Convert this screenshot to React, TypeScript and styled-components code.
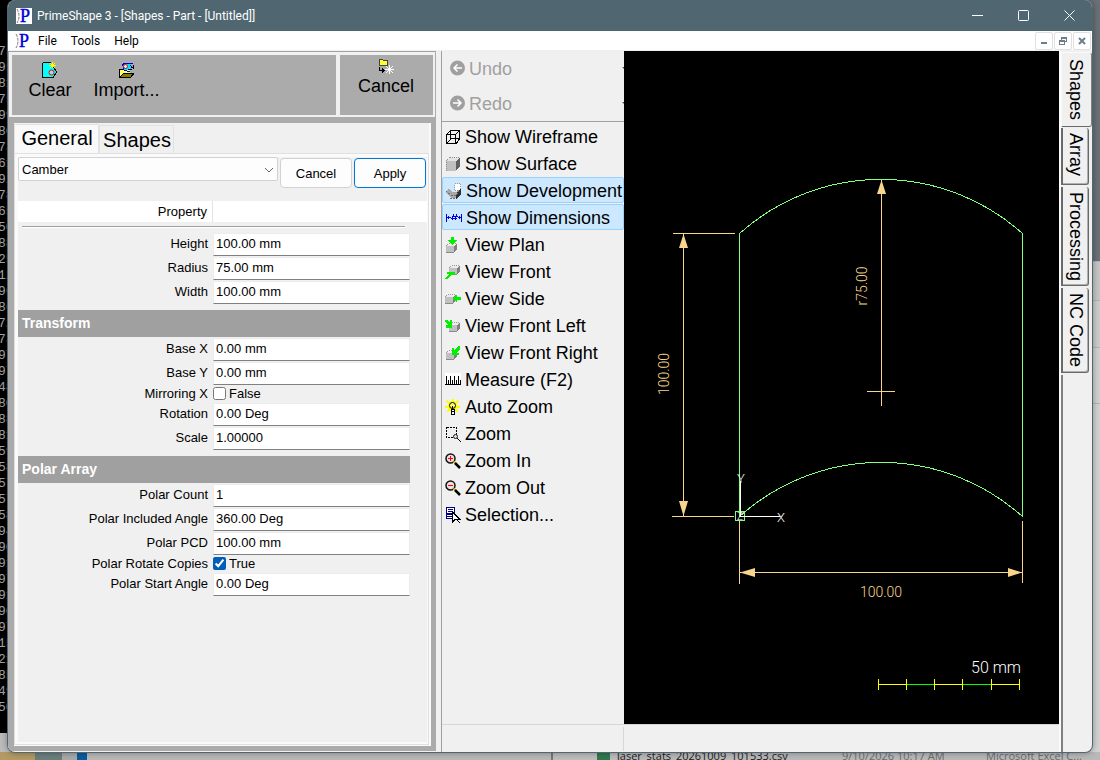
import React from "react";
import styled, { createGlobalStyle, css } from "styled-components";

const GlobalStyle = createGlobalStyle`
  *, *::before, *::after { box-sizing: border-box; }
  body { margin: 0; background: #bcbcbc; }
  button, input, select { font: inherit; color: inherit; }
  h2, p { margin: 0; }
`;

const ui = `"Liberation Sans", Arial, sans-serif`;
const chrome = `Roboto, "Open Sans", sans-serif`;
const segoe = `"Open Sans", "Noto Sans", sans-serif`;

/* ---------- desktop behind the window ---------- */

const Desktop = styled.div`
  display: grid;
  height: 100vh;
  overflow: hidden;
  font-family: ${ui};
`;

const Backdrop = styled.div`
  grid-area: 1 / 1;
  min-height: 0;
  min-width: 0;
  display: flex;
  flex-direction: column;
  overflow: hidden;
`;

const BackdropMain = styled.div`
  flex: 1;
  min-height: 0;
  display: flex;
  justify-content: space-between;
`;

const Console = styled.div`
  width: 20px;
  margin-bottom: 19px;
  padding-top: 44px;
  overflow: hidden;
  background: #000;
  color: #a4a4a4;
  font: 13px/16px "Liberation Mono", monospace;
  text-indent: -2px;
`;

const BehindRight = styled.div`
  width: 20px;
  display: flex;
  flex-direction: column;
  background: #d2d2d2;
`;

const Slab = styled.div<{ $h: number; $bg: string }>`
  height: ${(p) => p.$h}px;
  background: ${(p) => p.$bg};
  border-bottom: 1px solid #b4b4b4;
`;

const Explorer = styled.div`
  height: 8px;
  display: flex;
  overflow: hidden;
  background: #b9b9b9;
  font: 11px/16px ${segoe};
  white-space: nowrap;
`;

const Swatch = styled.div<{ $w: number; $bg: string }>`
  flex: none;
  width: ${(p) => p.$w}px;
  background: ${(p) => p.$bg};
`;

const FileCell = styled.span<{ $w: number; $dim?: boolean }>`
  flex: none;
  width: ${(p) => p.$w}px;
  height: 16px;
  margin-top: -4px;
  color: ${(p) => (p.$dim ? "#6c6c6c" : "#1c1c1c")};
`;

/* ---------- window chrome ---------- */

const Window = styled.div`
  grid-area: 1 / 1;
  z-index: 1;
  min-height: 0;
  min-width: 0;
  margin: 0 7px 7px;
  display: flex;
  flex-direction: column;
  overflow: hidden;
  border: 1px solid #506772;
  border-top: 0;
  border-radius: 8px;
  background: #f0f0f0;
  box-shadow: 0 0 6px rgba(0, 0, 0, 0.35);
`;

const TitleBar = styled.header`
  flex: none;
  height: 31px;
  padding-left: 8px;
  display: flex;
  align-items: center;
  gap: 5px;
  background: #506772;
  color: #fff;
  font: 12px/16px ${chrome};
`;

const TitleText = styled.span`
  flex: 1;
`;

const CaptionRow = styled.div`
  display: flex;
`;

const CaptionButton = styled.button`
  width: 46px;
  height: 31px;
  padding: 0;
  border: 0;
  background: none;
  color: #fff;
  display: grid;
  place-items: center;
`;

const MenuBar = styled.nav`
  flex: none;
  height: 20px;
  padding: 0 1px 0 7px;
  display: flex;
  align-items: center;
  background: #fff;
  border-bottom: 1px solid #f0f0f0;
  font: 12px/16px ${chrome};
`;

const MenuButton = styled.button`
  padding: 0 7px;
  border: 0;
  background: none;
  color: #000;
`;

const Spacer = styled.div`
  flex: 1;
`;

const MdiButton = styled.button`
  width: 18px;
  height: 18px;
  margin-left: 1px;
  padding: 0;
  border: 1px solid #e0e0e0;
  border-radius: 2px;
  background: #fff;
  color: #6a7f8c;
  display: grid;
  place-items: center;
`;

const Workspace = styled.div`
  flex: 1;
  min-height: 0;
  display: flex;
`;

/* ---------- left panel ---------- */

const LeftPanel = styled.section`
  flex: none;
  width: 428px;
  margin-bottom: 1px;
  display: flex;
  flex-direction: column;
  border-top: 1px solid #a0a0a0;
  background: #ababab;
`;

const ActionBar = styled.div`
  flex: none;
  height: 65px;
  margin: 0 1px;
  border: solid #f0f0f0;
  border-width: 3px 2px 2px 3px;
  display: flex;
  gap: 4px;
  background: #f0f0f0;
`;

const ActionGroup = styled.div<{ $grow?: boolean }>`
  ${(p) => (p.$grow ? "flex: 1;" : "width: 93px;")}
  display: flex;
  background: #ababab;
`;

const ActionButton = styled.button<{ $top: number; $w: number }>`
  width: ${(p) => p.$w}px;
  padding: ${(p) => p.$top}px 0 0;
  border: 0;
  background: none;
  color: #000;
  display: flex;
  flex-direction: column;
  align-items: center;
  gap: 2px;
  font-size: 18px;
  line-height: 20px;
`;

const Tabs = styled.div`
  flex: 1;
  min-height: 0;
  margin: 6px 5px 5px 6px;
  padding: 0 2px 1px 0;
  display: flex;
  flex-direction: column;
  background: #f0f0f0;
  box-shadow: inset -2px -1px 0 #fafafa;
`;

const TabStrip = styled.div`
  flex: none;
  height: 30px;
  padding-top: 1px;
  display: flex;
  align-items: flex-end;
`;

const Tab = styled.button<{ $on?: boolean }>`
  height: ${(p) => (p.$on ? 29 : 28)}px;
  width: ${(p) => (p.$on ? 85 : 75)}px;
  padding: 0 0 ${(p) => (p.$on ? 2 : 0)}px 1px;
  border: 1px solid #e2e2e2;
  border-bottom: 0;
  background: ${(p) => (p.$on ? "#f9f9f9" : "#f0f0f0")};
  color: #000;
  font-size: 20px;
  line-height: 26px;
`;

const TabPage = styled.div`
  flex: 1;
  min-height: 0;
  border: 1px solid #e0e0e0;
  padding: 3px 1px 2px 3px;
  background: #fafafa;
  display: flex;
`;

const Form = styled.form`
  flex: 1;
  background: #f0f0f0;
  font-size: 13px;
  line-height: 16px;
  color: #000;
`;

const FormTop = styled.div`
  height: 44px;
  display: flex;
  align-items: flex-start;
  gap: 2px;
`;

const SelectWrap = styled.label`
  position: relative;
  width: 260px;
  height: 24px;
  svg {
    position: absolute;
    right: 4px;
    top: 10px;
    pointer-events: none;
  }
`;

const Select = styled.select`
  appearance: none;
  width: 100%;
  height: 24px;
  padding: 1px 4px 0 3px;
  border: 1px solid #d2d2d2;
  border-radius: 2px;
  background: #fdfdfd;
`;

const PushButton = styled.button<{ $primary?: boolean }>`
  width: 72px;
  height: 30px;
  margin-top: 1px;
  padding: 1px 0 0;
  border: 1px solid ${(p) => (p.$primary ? "#0078d4" : "#d2d2d2")};
  border-radius: 4px;
  background: #fdfdfd;
`;

const GridHeader = styled.div`
  height: 21px;
  display: flex;
  background: #fff;
  line-height: 21px;
  span {
    width: 195px;
    padding-right: 5px;
    border-right: 1px solid #e4e4e4;
    text-align: right;
  }
`;

const Rule = styled.hr`
  height: 2px;
  margin: 4px 22px 4px 4px;
  border: 0;
  border-top: 1px solid #a0a0a0;
  background: #fff;
`;

const Section = styled.h2`
  height: 27px;
  margin: 6px 17px 0 0;
  padding-left: 4px;
  background: #a0a0a0;
  color: #fff;
  font-size: 14px;
  font-weight: bold;
  line-height: 27px;
`;

const Row = styled.div<{ $check?: boolean }>`
  height: ${(p) => (p.$check ? 17 : 24)}px;
  display: grid;
  grid-template-columns: 190px 1fr;
  column-gap: 5px;
  padding-right: 17px;
  text-align: right;
  line-height: ${(p) => (p.$check ? 17 : 24)}px;
`;

const Field = styled.input`
  width: 100%;
  height: 23px;
  margin-top: 1px;
  padding: 0 2px 2px 2px;
  border: 1px solid #ececec;
  border-bottom-color: #808080;
  border-radius: 0;
  background: #fff;
`;

const CheckLine = styled.label`
  display: flex;
  align-items: center;
  gap: 3px;
  input {
    width: 13px;
    height: 13px;
    margin: 0;
    accent-color: #005fb8;
  }
`;

/* ---------- command list ---------- */

const Center = styled.section`
  flex: 1;
  min-width: 0;
  margin-left: 5px;
  border-left: 1px solid #a0a0a0;
  display: flex;
  flex-direction: column;
`;

const CenterMain = styled.div`
  flex: 1;
  min-height: 0;
  display: flex;
`;

const Commands = styled.div`
  flex: none;
  width: 182px;
  display: flex;
  flex-direction: column;
  font-size: 18px;
  line-height: 20px;
`;

const History = styled.div`
  flex: none;
  margin-bottom: 1px;
  border-bottom: 1px solid #a0a0a0;
`;

const HistoryButton = styled.button`
  width: 100%;
  height: 35px;
  padding: 0 0 0 7px;
  border: 0;
  background: none;
  color: #a0a0a0;
  display: flex;
  align-items: center;
  gap: 4px;
  svg:first-child { margin-bottom: 2px; }
`;

const Command = styled.button<{ $on?: boolean }>`
  flex: none;
  height: 26px;
  margin-bottom: 1px;
  padding: 1px 0 0 2px;
  border: 1px solid transparent;
  background: none;
  color: #000;
  display: flex;
  align-items: center;
  gap: 4px;
  white-space: nowrap;
  ${(p) =>
    p.$on &&
    css`
      padding-top: 2px;
      padding-left: 3px;
      border-color: #99d1ff;
      border-radius: 2px;
      background: #cce8ff;
    `}
`;

const Canvas = styled.div`
  flex: 1;
  min-width: 0;
  display: flex;
  background: #000;
  svg { flex: 1; min-width: 0; }
`;

const StatusBar = styled.footer`
  flex: none;
  height: 28px;
  padding: 2px 0 1px;
  border-top: 1px solid #d7d7d7;
`;

const StatusCell = styled.div`
  width: 182px;
  height: 100%;
  border-right: 1px solid #d7d7d7;
`;

/* ---------- vertical page tabs ---------- */

const SideTabs = styled.aside`
  flex: none;
  width: 33px;
  display: flex;
  flex-direction: column;
  border-left: 2px solid #fafafa;
  font-size: 18px;
`;

const SideTab = styled.button<{ $h: number; $on?: boolean }>`
  flex: none;
  height: ${(p) => p.$h}px;
  width: 28px;
  margin: 0 0 2px;
  padding: 5px 0 0;
  border: solid #696969;
  border-width: 0 1px 1px 2px;
  border-radius: 0 3px 3px 0;
  background: #f0f0f0;
  color: #000;
  box-shadow: inset -1px -1px 0 #b0b0b0;
  writing-mode: vertical-rl;
  text-align: left;
  line-height: 24px;
  ${(p) =>
    p.$on &&
    css`
      width: 31px;
      margin: 1px 0 1px;
      padding: 6px 1px 0 0;
      border-color: #fafafa #808080 #696969 #fafafa;
      border-width: 1px;
      box-shadow: none;
    `}
`;

const SideRail = styled.div`
  flex: 1;
  border-left: 2px solid #808080;
`;

/* ---------- icons ---------- */

const Pix = ({ children, size = 16 }: { children: React.ReactNode; size?: number }) => (
  <svg width={size} height={size} viewBox={`0 0 ${size} ${size}`} shapeRendering="crispEdges" fill="none" aria-hidden="true">
    {children}
  </svg>
);

const Logo = ({ boxed }: { boxed?: boolean }) => (
  <svg width="16" height="16" viewBox="0 0 16 16" aria-hidden="true">
    {boxed && <rect width="16" height="16" fill="#fff" />}
    <path d="M1 1q4 7 0 14" fill="none" stroke="#777" strokeDasharray="3 1" />
    <text x="4" y="14" fontFamily="Liberation Serif, serif" fontSize="18" fill="#0000d8" stroke="#0000d8" strokeWidth=".4">P</text>
  </svg>
);

const ClearIcon = () => (
  <Pix>
    <path d="M1 1h8v4h2l4 5-4 5H1z" fill="#00ffff" />
    <path d="M.5 .5h8M.5 .5v15M.5 15.500h11M11 5l4 5-4 5" stroke="#000" />
    <circle cx="9.500" cy="10.500" r="2.500" fill="#9adfe8" stroke="#f00" shapeRendering="auto" />
    <path d="M10.500 0v6M7 3.500h7M8 1l5 5M13 1L8 6" stroke="#ff0" />
  </Pix>
);

const ImportIcon = () => (
  <Pix>
    <path d="M1 15V7h3l1 1h6v7z" fill="#ffff66" />
    <path d="M.5 15V7.500h3" stroke="#000" />
    <path d="M3 4l2-3h8l-2 3 2 3-3 1H5z" fill="#00e5ff" />
    <path d="M3 4l2-3h9M11 3l3 3M4 4l1 4 6 2" stroke="#0000d0" />
    <circle cx="6.500" cy="4.500" r="2" fill="#bff" stroke="#f00" shapeRendering="auto" />
    <path d="M1 15l4-4h10l-3 4z" fill="#808000" stroke="#000" />
    <path d="M9 7.500h4M12 5.500h2M14.500 3v4" stroke="#000" />
  </Pix>
);

const CancelIcon = () => (
  <Pix>
    <path d="M1 7V1h3l1 1h4v5z" fill="#ffff33" stroke="#444" />
    <path d="M1 9v3h4M4 10v5M5 11v3M6 12v1" stroke="#000" />
    <path d="M11.500 7v9M7 11.500h9M8 8l7 7M15 8l-7 7" stroke="#fff" />
  </Pix>
);

const CircleArrow = ({ right }: { right?: boolean }) => (
  <svg width="16" height="16" viewBox="0 0 16 16" aria-hidden="true">
    <circle cx="8.500" cy="8" r="7.500" fill="#a0a0a0" />
    <path d={right ? "M4 8h8M8.500 4.500L12 8l-3.500 3.500" : "M13 8H5M8.500 4.500L5 8l3.500 3.500"} fill="none" stroke="#fff" strokeWidth="1.500" />
  </svg>
);

const DropHint = () => (
  <svg width="2" height="4" viewBox="0 0 2 4" aria-hidden="true">
    <path d="M0 0h2v2z" fill="#555" />
  </svg>
);

const WireIcon = () => (
  <Pix>
    <path d="M1.500 5.500h9v9h-9zM5.500 1.500h9v8h-9zM2 5l4-4M11 5l4-4M11 15l4-6M2 14l4-4" stroke="#000" />
  </Pix>
);

const Cube = ({ x = 0, y = 0, s = 9 }: { x?: number; y?: number; s?: number }) => (
  <g transform={`translate(${x} ${y})`}>
    <path d={`M0 3l3-3h${s}l-3 3z`} fill="#ececec" />
    <path d={`M0 3h${s}v${s - 2}H0z`} fill="#c0c0c0" />
    <path d={`M${s} 3l3-3v${s - 2}l-3 3z`} fill="#808080" />
    <path d={`M0 3l3-3h${s}`} stroke="#9a9a9a" strokeDasharray="1 1" />
    <path d={`M0 ${s + 1}h${s}`} stroke="#8a8a8a" />
  </g>
);

const SurfaceIcon = () => (
  <Pix>
    <path d="M1 5h10v10H1z" fill="#c0c0c0" />
    <path d="M1 5l4-4h10l-4 4z" fill="#e4e4e4" />
    <path d="M11 5l4-4v9l-4 5z" fill="#606060" />
    <path d="M1 15V5l4-4h10" stroke="#909090" strokeDasharray="1 1" />
  </Pix>
);

const DevelopmentIcon = () => (
  <Pix>
    <path d="M8.500 .5h6v7h-6z" fill="#fff" stroke="#999" strokeDasharray="1 1" />
    <path d="M0 8l3-2 3 3 4 0 3-2v4l-4 4H5l-4-4z" fill="#a8a8a8" />
    <path d="M13 7l2-1v5l-5 5v-4z" fill="#303030" />
    <path d="M0 8l5 4h5l4-5M4 15h6" stroke="#707070" strokeDasharray="2 1" />
  </Pix>
);

const DimensionIcon = () => (
  <Pix>
    <path d="M.5 4v8M15.500 4v8M1 7.500h4M12 7.500h3M2.500 6v3M13.500 6v3M6 6.500h6M5 8.500h6" stroke="#0000e0" />
    <path d="M7.500 4v2M6.500 6v4M10.500 4v2M9.500 6v4" stroke="#0000e0" />
  </Pix>
);

const viewArrow: Record<string, React.ReactNode> = {
  plan: (
    <>
      <Cube x={1} y={6} s={8} />
      <path d="M6 0h3v3h3L8 8H7L3 3h3z" fill="#00f000" />
    </>
  ),
  front: (
    <>
      <Cube x={4} y={1} s={8} />
      <path d="M0 15l4-5H2V8h8v3l-3 0-5 4z" fill="#00f000" />
    </>
  ),
  side: (
    <>
      <Cube x={0} y={3} s={8} />
      <path d="M8 7l4-4v3h4v3h-4v3z" fill="#00f000" />
    </>
  ),
  left: (
    <>
      <Cube x={4} y={4} s={8} />
      <path d="M0 2h2l3 3V2h2v8H1V7h2L0 4z" fill="#00f000" />
    </>
  ),
  right: (
    <>
      <Cube x={1} y={5} s={8} />
      <path d="M15 1h-2L9 5V3H7v7h7V8h-2l3-4z" fill="#00f000" />
    </>
  ),
};

const MeasureIcon = () => (
  <Pix>
    <path d="M0 1h16v12H0z" fill="#fff" />
    <path d="M0 12.500h16M1.500 4v8M3.500 8v4M5.500 4v8M7.500 8v4M9.500 4v8M11.500 8v4M13.500 4v8M15.500 8v4" stroke="#000" />
  </Pix>
);

const BulbIcon = () => (
  <Pix>
    <path d="M7.500 0v3M2 2l3 3M13 2l-3 3M0 7.500h3M15 7.500h-3M2 13l3-3M13 13l-3-3" stroke="#ff0" strokeWidth="2" />
    <circle cx="7.500" cy="7" r="5" fill="#ff0" />
    <circle cx="7.500" cy="6.500" r="3" fill="#ffff66" stroke="#000" shapeRendering="auto" />
    <path d="M6 10h3v5H6z" fill="#fff" stroke="#000" />
    <path d="M7.500 7v4M6 12.500h3" stroke="#000" />
  </Pix>
);

const ZoomBoxIcon = () => (
  <Pix>
    <path d="M1.500 1.500h10v10h-10z" stroke="#000" strokeDasharray="2 1" />
    <circle cx="10.500" cy="10.500" r="2" fill="#ddd" stroke="#222" shapeRendering="auto" />
    <path d="M12 12l4 4" stroke="#000" />
  </Pix>
);

const LensIcon = ({ plus }: { plus?: boolean }) => (
  <Pix>
    <circle cx="5.500" cy="5.500" r="4.500" fill="#f2dede" stroke="#111" strokeWidth="1.500" shapeRendering="auto" />
    <path d="M8.500 8.500l2.500 2.500" stroke="#d0c000" strokeWidth="2" shapeRendering="auto" />
    <path d="M10 10l5 5" stroke="#000" strokeWidth="2.500" shapeRendering="auto" />
    <path d={plus ? "M3 5.500h5M5.500 3v5" : "M3 5.500h5"} stroke="#f00" />
  </Pix>
);

const SelectionIcon = () => (
  <Pix>
    <path d="M1.500 .5h8v11h-8z" fill="#fff" stroke="#000080" />
    <path d="M3 2.500h5M3 4.500h5" stroke="#000080" />
    <path d="M1 6h8v4H1z" fill="#000080" />
    <path d="M2 8.500h5" stroke="#fff" />
    <path d="M7.500 5v10l3-3h4z" fill="#fff" stroke="#000" />
    <path d="M11 12l4 4" stroke="#000" />
  </Pix>
);

/* ---------- data ---------- */

const consoleLines =
  "75 95 81 75 99 80 73 61 92 78 65 50 88 25 12 96 86 72 73 97 97 48 80 88 81 59 58 57 57 58 94 90 91 97 91 90 97 15 21 85 49 50".split(" ");

type Item = { label: string; value: string; checked?: boolean };

const groups: { title?: string; items: Item[] }[] = [
  {
    items: [
      { label: "Height", value: "100.00 mm" },
      { label: "Radius", value: "75.00 mm" },
      { label: "Width", value: "100.00 mm" },
    ],
  },
  {
    title: "Transform",
    items: [
      { label: "Base X", value: "0.00 mm" },
      { label: "Base Y", value: "0.00 mm" },
      { label: "Mirroring X", value: "False", checked: false },
      { label: "Rotation", value: "0.00 Deg" },
      { label: "Scale", value: "1.00000" },
    ],
  },
  {
    title: "Polar Array",
    items: [
      { label: "Polar Count", value: "1" },
      { label: "Polar Included Angle", value: "360.00 Deg" },
      { label: "Polar PCD", value: "100.00 mm" },
      { label: "Polar Rotate Copies", value: "True", checked: true },
      { label: "Polar Start Angle", value: "0.00 Deg" },
    ],
  },
];

const commands: { label: string; icon: React.ReactNode; on?: boolean }[] = [
  { label: "Show Wireframe", icon: <WireIcon /> },
  { label: "Show Surface", icon: <SurfaceIcon /> },
  { label: "Show Development", icon: <DevelopmentIcon />, on: true },
  { label: "Show Dimensions", icon: <DimensionIcon />, on: true },
  { label: "View Plan", icon: <Pix>{viewArrow.plan}</Pix> },
  { label: "View Front", icon: <Pix>{viewArrow.front}</Pix> },
  { label: "View Side", icon: <Pix>{viewArrow.side}</Pix> },
  { label: "View Front Left", icon: <Pix>{viewArrow.left}</Pix> },
  { label: "View Front Right", icon: <Pix>{viewArrow.right}</Pix> },
  { label: "Measure (F2)", icon: <MeasureIcon /> },
  { label: "Auto Zoom", icon: <BulbIcon /> },
  { label: "Zoom", icon: <ZoomBoxIcon /> },
  { label: "Zoom In", icon: <LensIcon plus /> },
  { label: "Zoom Out", icon: <LensIcon /> },
  { label: "Selection...", icon: <SelectionIcon /> },
];

/* ---------- drawing ---------- */

const Drawing = () => (
  <svg viewBox="0 0 435 673" fill="none" fontFamily="Roboto, Arial, sans-serif" fontWeight="300" role="img" aria-label="Camber part drawing">
    <g stroke="#f8d48c" shapeRendering="crispEdges">
      <path d="M49 182.500H111M48 465.500H110M59.500 183V465" />
      <path d="M115.500 470V533M398.500 470V532M116 521.500H398" />
      <path d="M257.500 129V355M243 340.500H271" />
    </g>
    <g fill="#f8d48c">
      <path d="M59.500 183l4.500 14h-9zM59.500 465l4.500 -15h-9z" />
      <path d="M257.500 129l4.500 14h-9z" />
      <path d="M116 521.500l15 -4.500v9zM398 521.500l-14 -4.500v9z" />
    </g>
    <g fill="#f8d48c" fontSize="14" textAnchor="middle">
      <text x="257" y="546">100.00</text>
      <text transform="translate(45 323) rotate(-90)">100.00</text>
      <text transform="translate(243 235) rotate(-90)">r75.00</text>
    </g>
    <g stroke="#80ff80" shapeRendering="crispEdges">
      <path d="M115.500 465.500V182.500A212 212 0 0 1 398.500 182.500V465.500" />
      <path d="M115.500 465.500A212 212 0 0 1 398.500 465.500" />
      <path d="M111.500 460.500h9v9h-9z" />
    </g>
    <path d="M116.500 465.500V430M116 465.500H156" stroke="#fff" shapeRendering="crispEdges" />
    <g fill="#fff" fontSize="13" textAnchor="middle">
      <text x="117" y="432">Y</text>
      <text x="157" y="471">X</text>
      <text x="116" y="469" fontSize="10">Z</text>
    </g>
    <text x="347" y="622" fontSize="16" fill="#fff">50 mm</text>
    <g shapeRendering="crispEdges">
      <path d="M254 633.500H396" stroke="#ff0" />
      <path d="M283 633.500H310M339 633.500H367" stroke="#0f0" />
      <path d="M254.500 628v11M282.500 628v11M310.500 628v11M338.500 628v11M367.500 628v11M395.500 628v11" stroke="#ff0" />
    </g>
  </svg>
);

const PropertyRow = ({ item }: { item: Item }) => {
  const id = item.label.toLowerCase().replace(/ /g, "-");
  if (item.checked !== undefined) {
    return (
      <Row $check>
        <label htmlFor={id}>{item.label}</label>
        <CheckLine>
          <input id={id} type="checkbox" defaultChecked={item.checked} />
          {item.value}
        </CheckLine>
      </Row>
    );
  }
  return (
    <Row>
      <label htmlFor={id}>{item.label}</label>
      <Field id={id} type="text" defaultValue={item.value} />
    </Row>
  );
};

const CaptionButtons = () => (
  <CaptionRow>
    <CaptionButton aria-label="Minimize">
      <Pix size={11}><path d="M0 5.500h11" stroke="currentColor" /></Pix>
    </CaptionButton>
    <CaptionButton aria-label="Maximize">
      <svg width="11" height="11" viewBox="0 0 11 11" fill="none" aria-hidden="true">
        <rect x=".5" y=".5" width="10" height="10" rx="1" stroke="currentColor" />
      </svg>
    </CaptionButton>
    <CaptionButton aria-label="Close">
      <svg width="11" height="11" viewBox="0 0 11 11" fill="none" aria-hidden="true">
        <path d="M.5 .5l10 10M10.500 .5l-10 10" stroke="currentColor" />
      </svg>
    </CaptionButton>
  </CaptionRow>
);

export default function App() {
  return (
    <Desktop>
      <GlobalStyle />
      <Backdrop>
        <BackdropMain>
          <Console>
            {consoleLines.map((line, i) => (
              <div key={i}>{line}</div>
            ))}
          </Console>
          <BehindRight>
            <Slab $h={262} $bg="#6a7177" />
            <Slab $h={39} $bg="#c6c6c6" />
            <Slab $h={47} $bg="#cccccc" />
            <Slab $h={56} $bg="#d0d0d0" />
          </BehindRight>
        </BackdropMain>
        <Explorer>
          <Swatch $w={35} $bg="#b39a63" />
          <Swatch $w={27} $bg="#6d7f7d" />
          <Swatch $w={15} $bg="#a9a9a9" />
          <Swatch $w={10} $bg="#0a5c9e" />
          <Swatch $w={464} $bg="#b9b9b9" />
          <Swatch $w={2} $bg="#777777" />
          <Swatch $w={44} $bg="#bdbdbd" />
          <Swatch $w={13} $bg="#2f7a4d" />
          <Swatch $w={7} $bg="#bdbdbd" />
          <FileCell $w={225}>laser_stats_20261009_101533.csv</FileCell>
          <FileCell $w={144} $dim>9/10/2026 10:17 AM</FileCell>
          <FileCell $w={114} $dim>Microsoft Excel C...</FileCell>
        </Explorer>
      </Backdrop>

      <Window>
        <TitleBar>
          <Logo boxed />
          <TitleText>PrimeShape 3 - [Shapes - Part - [Untitled]]</TitleText>
          <CaptionButtons />
        </TitleBar>
        <MenuBar>
          <Logo />
          <MenuButton>File</MenuButton>
          <MenuButton>Tools</MenuButton>
          <MenuButton>Help</MenuButton>
          <Spacer />
          <MdiButton aria-label="Minimize document">
            <Pix size={8}><path d="M1 6h6" stroke="currentColor" strokeWidth="2" /></Pix>
          </MdiButton>
          <MdiButton aria-label="Restore document">
            <Pix size={8}><path d="M2.500 3V.500h5v4H6M.500 3.500h5v4h-5zM0 4.500h6M2 1.500h6" stroke="currentColor" /></Pix>
          </MdiButton>
          <MdiButton aria-label="Close document">
            <svg width="8" height="8" viewBox="0 0 8 8" aria-hidden="true">
              <path d="M1 1l6 6M7 1L1 7" stroke="currentColor" strokeWidth="2" />
            </svg>
          </MdiButton>
        </MenuBar>

        <Workspace>
          <LeftPanel>
            <ActionBar>
              <ActionGroup $grow>
                <ActionButton $top={7} $w={76}><ClearIcon />Clear</ActionButton>
                <ActionButton $top={7} $w={77}><ImportIcon />Import...</ActionButton>
              </ActionGroup>
              <ActionGroup>
                <ActionButton $top={3} $w={92}><CancelIcon />Cancel</ActionButton>
              </ActionGroup>
            </ActionBar>
            <Tabs>
              <TabStrip role="tablist">
                <Tab role="tab" aria-selected="true" $on>General</Tab>
                <Tab role="tab" aria-selected="false">Shapes</Tab>
              </TabStrip>
              <TabPage>
                <Form onSubmit={(e) => e.preventDefault()}>
                  <FormTop>
                    <SelectWrap>
                      <Select aria-label="Shape" defaultValue="Camber">
                        <option>Camber</option>
                      </Select>
                      <svg width="10" height="6" viewBox="0 0 10 6" fill="none" aria-hidden="true">
                        <path d="M1 1l4 4 4-4" stroke="#666" />
                      </svg>
                    </SelectWrap>
                    <PushButton type="button">Cancel</PushButton>
                    <PushButton type="submit" $primary>Apply</PushButton>
                  </FormTop>
                  <GridHeader><span>Property</span></GridHeader>
                  <Rule />
                  {groups.map((group, i) => (
                    <React.Fragment key={i}>
                      {group.title && <Section>{group.title}</Section>}
                      {group.items.map((item) => (
                        <PropertyRow key={item.label} item={item} />
                      ))}
                    </React.Fragment>
                  ))}
                </Form>
              </TabPage>
            </Tabs>
          </LeftPanel>

          <Center>
            <CenterMain>
              <Commands>
                <History>
                  <HistoryButton disabled><CircleArrow />Undo<Spacer /><DropHint /></HistoryButton>
                  <HistoryButton disabled><CircleArrow right />Redo<Spacer /><DropHint /></HistoryButton>
                </History>
                {commands.map((c) => (
                  <Command key={c.label} $on={c.on}>{c.icon}{c.label}</Command>
                ))}
              </Commands>
              <Canvas><Drawing /></Canvas>
            </CenterMain>
            <StatusBar><StatusCell /></StatusBar>
          </Center>

          <SideTabs>
            <SideTab $h={75} $on>Shapes</SideTab>
            <SideTab $h={57}>Array</SideTab>
            <SideTab $h={99}>Processing</SideTab>
            <SideTab $h={85}>NC Code</SideTab>
            <SideRail />
          </SideTabs>
        </Workspace>
      </Window>
    </Desktop>
  );
}
